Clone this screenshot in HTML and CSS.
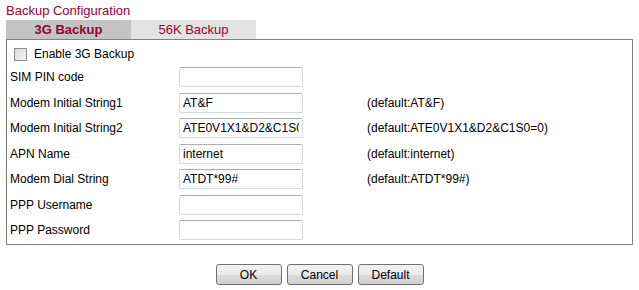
FILE: index.html
```html
<!DOCTYPE html>
<html>
  <head>
    <title>Backup Configuration</title>
    <meta name="viewport" content="width=device-width, initial-scale=1" />
    <link rel="stylesheet" href="styles.css">
  </head>
  <body>
    <div class="page">
      <h2 class="title">Backup Configuration</h2>
      <div class="tabs">
        <div class="tab active">3G Backup</div>
        <div class="tab">56K Backup</div>
      </div>
      <form class="panel" autocomplete="off">
        <label class="check-row">
          <input type="checkbox" class="check" />
          <span>Enable 3G Backup</span>
        </label>
        <div class="fields">
          <label>SIM PIN code</label>
          <input type="text" />
          <span></span>

          <label>Modem Initial String1</label>
          <input type="text" value="AT&amp;F" />
          <span class="hint">(default:AT&amp;F)</span>

          <label>Modem Initial String2</label>
          <input type="text" value="ATE0V1X1&amp;D2&amp;C1S0=0" />
          <span class="hint">(default:ATE0V1X1&amp;D2&amp;C1S0=0)</span>

          <label>APN Name</label>
          <input type="text" value="internet" />
          <span class="hint">(default:internet)</span>

          <label>Modem Dial String</label>
          <input type="text" value="ATDT*99#" />
          <span class="hint">(default:ATDT*99#)</span>

          <label>PPP Username</label>
          <input type="text" />
          <span></span>

          <label>PPP Password</label>
          <input type="password" />
          <span></span>
        </div>
      </form>
      <div class="buttons">
        <button type="button">OK</button>
        <button type="button">Cancel</button>
        <button type="button">Default</button>
      </div>
    </div>
  </body>
</html>
```

FILE: styles.css
```css
* {
  padding: 0;
  margin: 0;
  box-sizing: border-box;
  font-family: "Liberation Sans", Arial, sans-serif;
}
body {
  background-color: #ffffff;
  color: #000000;
  font-size: 12px;
}
.page {
  padding: 0 6px;
}
.title {
  font-size: 13px;
  font-weight: normal;
  color: #990033;
  line-height: 22px;
  height: 20px;
}
.tabs {
  display: flex;
  height: 19px;
}
.tab {
  width: 125px;
  line-height: 19px;
  text-align: center;
  font-size: 13px;
  color: #990033;
  background-color: #e3e3e3;
}
.tab.active {
  background-color: #c3c3c3;
  font-weight: bold;
}
.panel {
  border: 1px solid #808080;
  padding: 4px 3px 4px;
}
.check-row {
  display: flex;
  align-items: center;
  height: 20px;
  margin-bottom: 3px;
}
.check {
  appearance: none;
  width: 13px;
  height: 13px;
  margin: 0 7px 0 4px;
  border: 1px solid #8e8f8f;
  background: linear-gradient(135deg, #d8d8d8, #f8f8f8);
}
.fields {
  display: grid;
  grid-template-columns: 169px 124px 1fr;
  grid-auto-rows: 20px;
  row-gap: 5.5px;
  align-items: center;
}
.fields input {
  height: 20px;
  width: 124px;
  padding: 0 3px;
  font-size: 12px;
  border: 1px solid #d4d7dc;
  border-top-color: #abadb3;
  border-radius: 2px;
  outline: none;
}
.hint {
  padding-left: 64px;
}
.buttons {
  display: flex;
  justify-content: center;
  gap: 5px;
  margin-top: 19px;
}
button {
  width: 66px;
  height: 21px;
  font-size: 12px;
  border: 1px solid #707070;
  border-radius: 3px;
  background: linear-gradient(#f2f2f2 0%, #ebebeb 50%, #dddddd 51%, #cfcfcf 100%);
  color: #000000;
}
```
